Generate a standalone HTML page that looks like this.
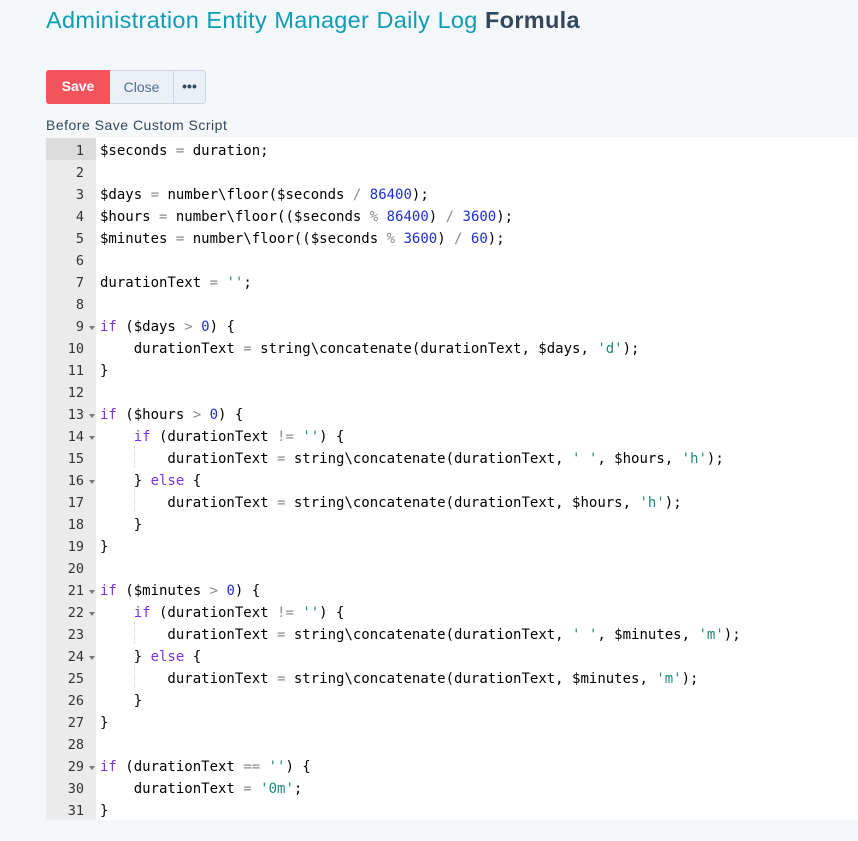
<!DOCTYPE html>
<html><head><meta charset="utf-8"><style>
html,body{margin:0;padding:0;background:#f5f8fa;width:858px;height:841px;overflow:hidden}
body{font-family:"Liberation Sans","DejaVu Sans",sans-serif;color:#33475b;position:relative}
h1{position:absolute;left:46px;top:7px;margin:0;font-weight:400;font-size:23.5px;color:#0f9cb4;letter-spacing:0.3px;word-spacing:0.5px}
h1 b{color:#33475b;font-weight:700}
.btns{position:absolute;left:46px;top:70px;height:34px;display:flex}
.btn{height:34px;line-height:34px;font-size:14px;text-align:center;box-sizing:border-box}
.save{width:64px;background:#f2545b;color:#fff;font-weight:700;border-radius:3px 0 0 3px;line-height:33px}
.close{width:64px;background:#eaf0f6;color:#506e91;border:1px solid #cbd6e2;border-left:none;line-height:32px}
.more{width:32px;background:#eaf0f6;color:#33475b;border:1px solid #cbd6e2;border-left:none;border-radius:0 3px 3px 0;font-weight:700;font-size:14px;line-height:30px}
.lbl{position:absolute;left:46px;top:117px;font-size:14px;color:#33475b;letter-spacing:0.5px}
.ed{position:absolute;left:46px;top:138px;width:812px;height:682px;background:#fff}
.gut{position:absolute;left:0;top:0;width:50px;height:682px;background:#ebebeb}
.code{position:absolute;left:0;top:0;width:812px;font-family:"DejaVu Sans Mono",monospace;font-size:14px}
.ln{height:22px;line-height:22px;position:relative;white-space:pre}
.n{position:absolute;left:0;top:2px;width:38px;text-align:right;color:#333;font-size:13.5px}
.ln.a .n{background:#dcdcdc;width:50px;box-sizing:border-box;padding-right:12px;top:0;line-height:22px;padding-top:2px;height:22px}
.f::after{content:"";position:absolute;left:43px;top:12px;border-left:3px solid transparent;border-right:3px solid transparent;border-top:4px solid #777}
.t{position:absolute;left:54px;top:2px;color:#000}
.k{color:#7b34e0}.o{color:#8b8b8b}.m{color:#1c2fd0}.s{color:#1a8a77}
.g{position:absolute;top:0;height:22px;border-left:1px dotted #ccc}
</style></head><body>
<h1>Administration Entity Manager Daily Log <b>Formula</b></h1>
<div class="btns"><div class="btn save">Save</div><div class="btn close">Close</div><div class="btn more">•••</div></div>
<div class="lbl">Before Save Custom Script</div>
<div class="ed"><div class="gut"></div>
<div class="code">
<div class="ln a"><span class="n">1</span><span class="t">$seconds <span class="o">=</span> duration;</span></div>
<div class="ln"><span class="n">2</span></div>
<div class="ln"><span class="n">3</span><span class="t">$days <span class="o">=</span> number\floor($seconds <span class="o">/</span> <span class="m">86400</span>);</span></div>
<div class="ln"><span class="n">4</span><span class="t">$hours <span class="o">=</span> number\floor(($seconds <span class="o">%</span> <span class="m">86400</span>) <span class="o">/</span> <span class="m">3600</span>);</span></div>
<div class="ln"><span class="n">5</span><span class="t">$minutes <span class="o">=</span> number\floor(($seconds <span class="o">%</span> <span class="m">3600</span>) <span class="o">/</span> <span class="m">60</span>);</span></div>
<div class="ln"><span class="n">6</span></div>
<div class="ln"><span class="n">7</span><span class="t">durationText <span class="o">=</span> <span class="s">''</span>;</span></div>
<div class="ln"><span class="n">8</span></div>
<div class="ln f"><span class="n">9</span><span class="t"><span class="k">if</span> ($days <span class="o">&gt;</span> <span class="m">0</span>) {</span></div>
<div class="ln"><span class="n">10</span><span class="t">    durationText <span class="o">=</span> string\concatenate(durationText, $days, <span class="s">'d'</span>);</span></div>
<div class="ln"><span class="n">11</span><span class="t">}</span></div>
<div class="ln"><span class="n">12</span></div>
<div class="ln f"><span class="n">13</span><span class="t"><span class="k">if</span> ($hours <span class="o">&gt;</span> <span class="m">0</span>) {</span></div>
<div class="ln f"><span class="n">14</span><span class="t">    <span class="k">if</span> (durationText <span class="o">!=</span> <span class="s">''</span>) {</span></div>
<div class="ln"><span class="n">15</span><span class="g" style="left:88px"></span><span class="t">        durationText <span class="o">=</span> string\concatenate(durationText, <span class="s">' '</span>, $hours, <span class="s">'h'</span>);</span></div>
<div class="ln f"><span class="n">16</span><span class="t">    } <span class="k">else</span> {</span></div>
<div class="ln"><span class="n">17</span><span class="g" style="left:88px"></span><span class="t">        durationText <span class="o">=</span> string\concatenate(durationText, $hours, <span class="s">'h'</span>);</span></div>
<div class="ln"><span class="n">18</span><span class="t">    }</span></div>
<div class="ln"><span class="n">19</span><span class="t">}</span></div>
<div class="ln"><span class="n">20</span></div>
<div class="ln f"><span class="n">21</span><span class="t"><span class="k">if</span> ($minutes <span class="o">&gt;</span> <span class="m">0</span>) {</span></div>
<div class="ln f"><span class="n">22</span><span class="t">    <span class="k">if</span> (durationText <span class="o">!=</span> <span class="s">''</span>) {</span></div>
<div class="ln"><span class="n">23</span><span class="g" style="left:88px"></span><span class="t">        durationText <span class="o">=</span> string\concatenate(durationText, <span class="s">' '</span>, $minutes, <span class="s">'m'</span>);</span></div>
<div class="ln f"><span class="n">24</span><span class="t">    } <span class="k">else</span> {</span></div>
<div class="ln"><span class="n">25</span><span class="g" style="left:88px"></span><span class="t">        durationText <span class="o">=</span> string\concatenate(durationText, $minutes, <span class="s">'m'</span>);</span></div>
<div class="ln"><span class="n">26</span><span class="t">    }</span></div>
<div class="ln"><span class="n">27</span><span class="t">}</span></div>
<div class="ln"><span class="n">28</span></div>
<div class="ln f"><span class="n">29</span><span class="t"><span class="k">if</span> (durationText <span class="o">==</span> <span class="s">''</span>) {</span></div>
<div class="ln"><span class="n">30</span><span class="t">    durationText <span class="o">=</span> <span class="s">'0m'</span>;</span></div>
<div class="ln"><span class="n">31</span><span class="t">}</span></div>
</div></div>
</body></html>
